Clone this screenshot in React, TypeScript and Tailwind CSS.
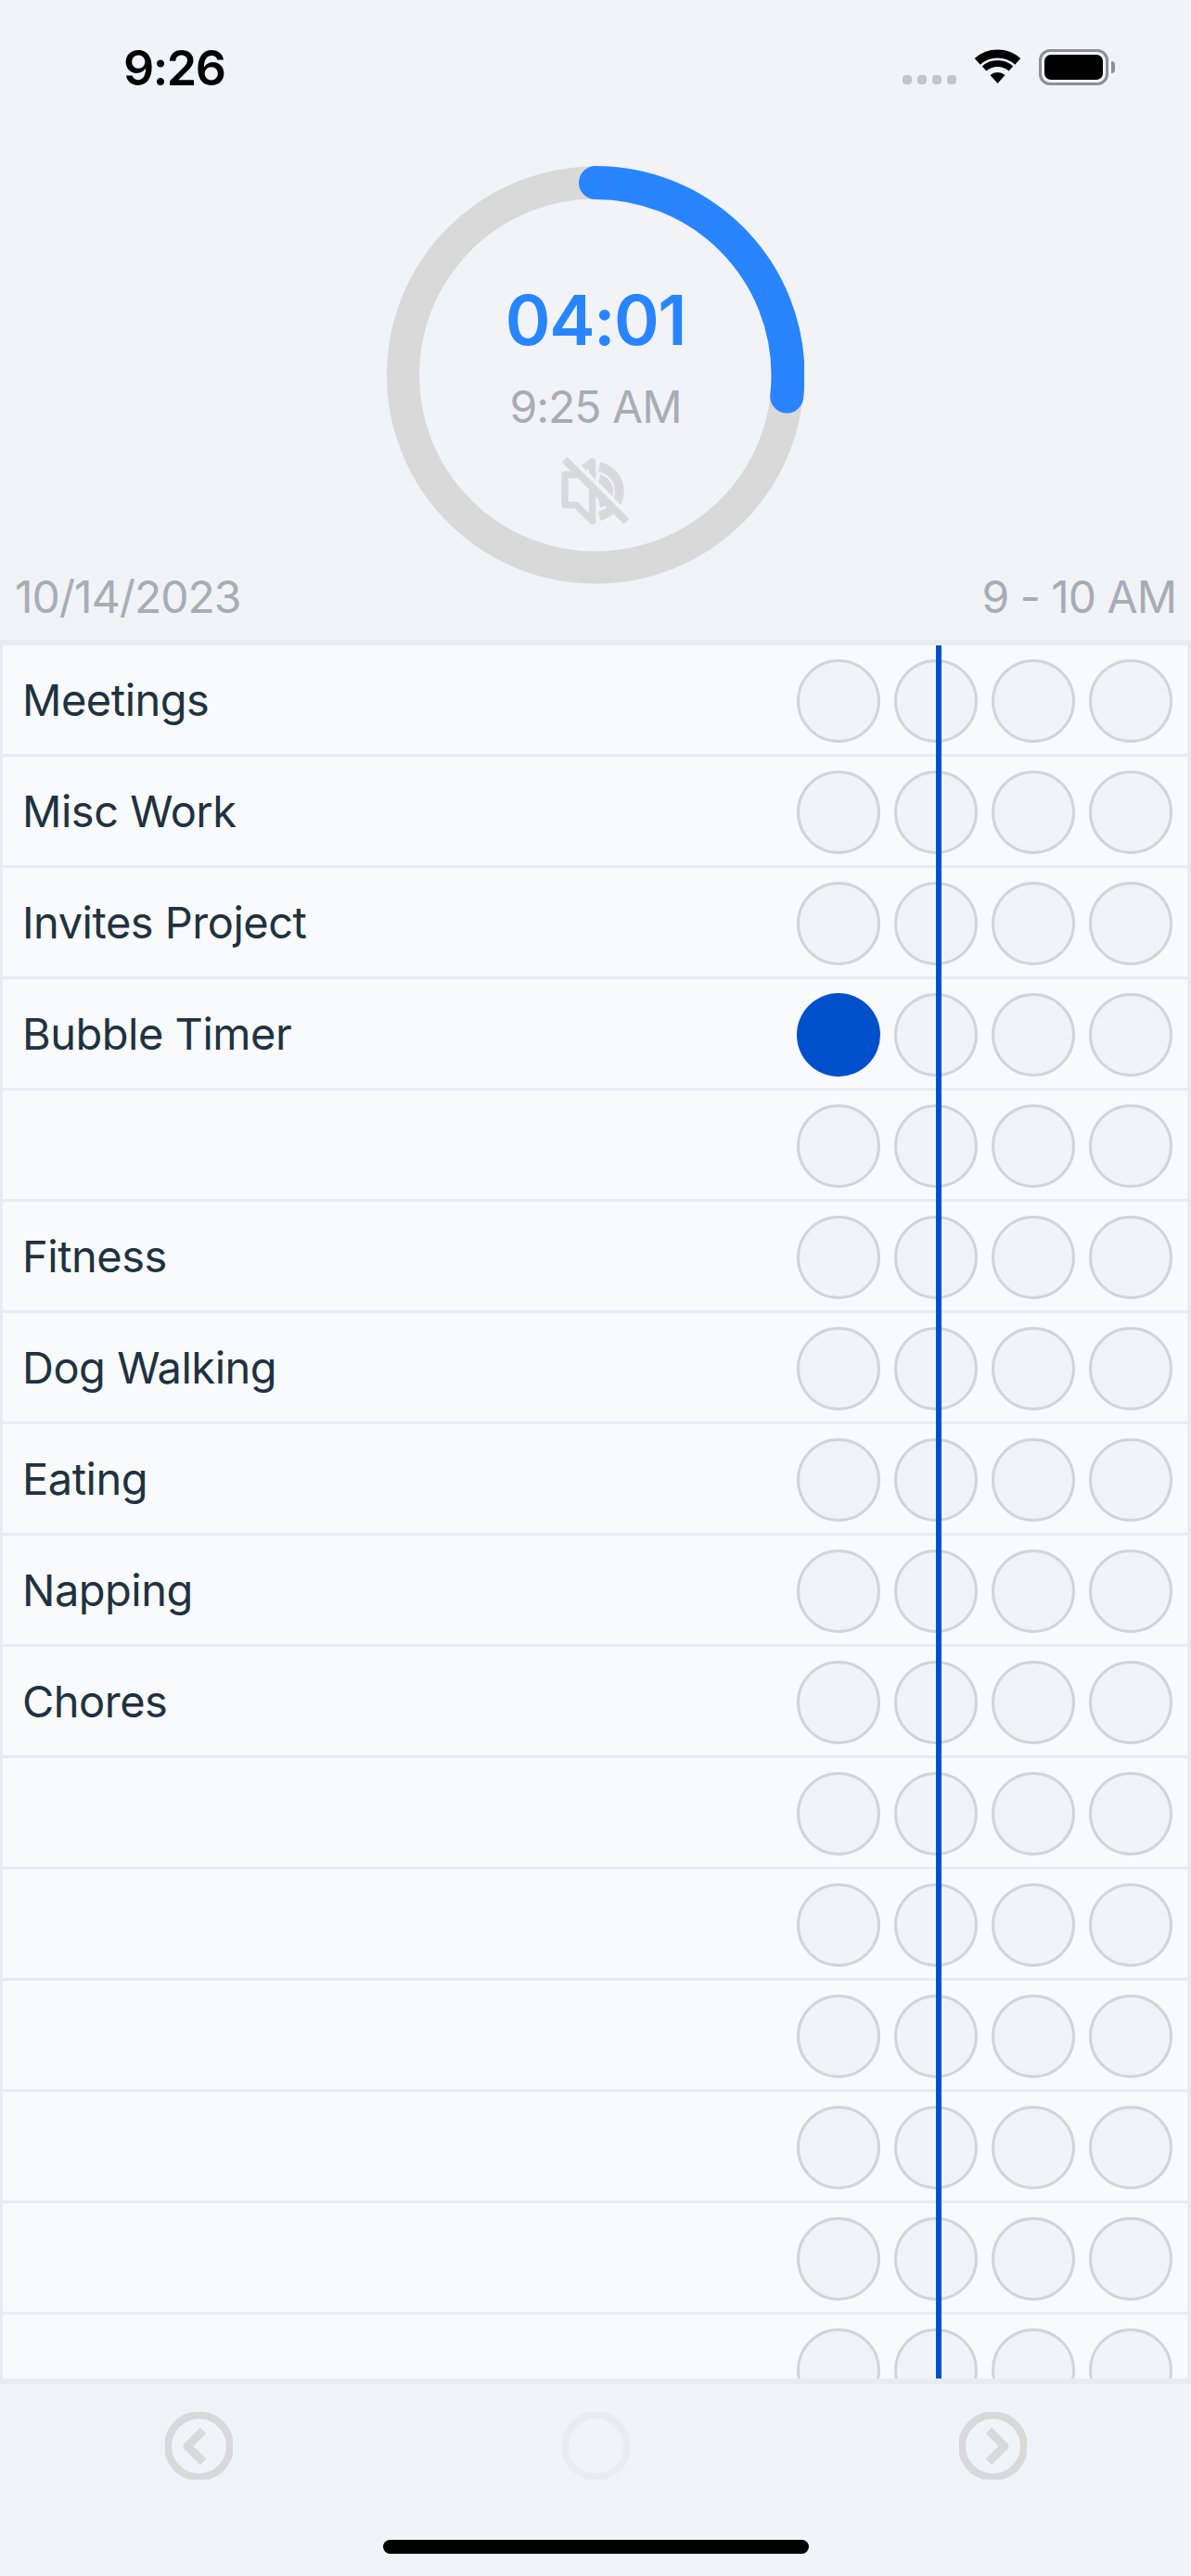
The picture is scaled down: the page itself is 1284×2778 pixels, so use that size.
const rows = [
  "Meetings",
  "Misc Work",
  "Invites Project",
  "Bubble Timer",
  "",
  "Fitness",
  "Dog Walking",
  "Eating",
  "Napping",
  "Chores",
  "",
  "",
  "",
  "",
  "",
  "",
];

function StatusBar() {
  return (
    <div className="h-[179px] flex items-start justify-between pt-[44px] pl-[133px] pr-[82px]">
      <span className="text-[52px] leading-[60px] font-semibold text-black tracking-[-1.5px]">9:26</span>
      <div className="flex items-start mt-[9px]">
        <div className="flex gap-[6px] mt-[28px] mr-[20px]">
          {[0, 1, 2, 3].map((i) => (
            <div key={i} className="w-[10px] h-[10px] rounded-[4px] bg-[#c4c4c6]" />
          ))}
        </div>
        <svg width="49" height="38" viewBox="0 0 49 38" className="mr-[20px]">
          <path d="M2.8 13.3A32.5 32.5 0 0 1 46.2 13.3" fill="none" stroke="#000" strokeWidth="9" />
          <path d="M10.1 21A21.5 21.5 0 0 1 38.9 21" fill="none" stroke="#000" strokeWidth="7" />
          <path d="M24.5 37L16.5 28.1A12 12 0 0 1 32.5 28.1Z" fill="#000" />
        </svg>
        <div className="flex items-center">
          <div className="w-[75px] h-[39px] rounded-[12px] border-[3px] border-[#8e8e93] p-[3px]">
            <div className="w-full h-full rounded-[7px] bg-black" />
          </div>
          <div className="w-[4px] h-[13px] ml-[3px] rounded-r-full bg-[#8e8e93]" />
        </div>
      </div>
    </div>
  );
}

function MuteIcon() {
  return (
    <svg width="74" height="76" viewBox="135 72 222 228">
      <path d="M147 135H183L236 92V285L183 233H147Z" fill="none" stroke="#d9d9d9" strokeWidth="22" strokeLinejoin="round" />
      <path d="M258 109A81 81 0 0 1 258 268" fill="none" stroke="#d9d9d9" strokeWidth="30" />
      <path d="M258 149A40 40 0 0 1 258 227" fill="none" stroke="#d9d9d9" strokeWidth="28" />
      <path d="M152 80L352 280" stroke="#f1f3f7" strokeWidth="34" />
      <path d="M146 86L346 286" stroke="#d9d9d9" strokeWidth="24" />
    </svg>
  );
}

function TimerRing() {
  return (
    <div className="relative w-[450px] h-[451px] mx-auto flex flex-col items-center pt-[121px]">
      <svg width="450" height="451" viewBox="0 0 450 451" className="absolute inset-0">
        <circle cx="225" cy="225.5" r="207.5" fill="none" stroke="#d9d9d9" strokeWidth="35" />
        <circle
          cx="225"
          cy="225.5"
          r="207.5"
          fill="none"
          stroke="#2885ff"
          strokeWidth="36"
          strokeLinecap="round"
          strokeDasharray="349 1304"
          transform="rotate(-90 225 225.5)"
        />
      </svg>
      <span className="text-[74px] leading-[90px] font-semibold tracking-[-1.5px] text-[#2885ff]">04:01</span>
      <span className="text-[48px] leading-[58px] tracking-[-1px] text-[#a8adb4] mt-[20px]">9:25 AM</span>
      <div className="mt-[23px]">
        <MuteIcon />
      </div>
    </div>
  );
}

function Bubble({ filled }: { filled?: boolean }) {
  return filled ? (
    <div className="w-[90px] h-[90px] rounded-full bg-[#0050cc]" />
  ) : (
    <div className="w-[90px] h-[90px] rounded-full bg-[#f1f3f6] border-[3px] border-[#d2d5d8]" />
  );
}

function Row({ name, active }: { name: string; active: boolean }) {
  return (
    <div className="h-[120px] shrink-0 flex items-center justify-between bg-[#f8fafc] border-b-[3px] border-[#e9ebf0] pl-[21px] pr-[16px] pt-[3px]">
      <span className="text-[47px] leading-[60px] tracking-[-0.5px] text-[#1f3240] pb-[2px]">{name}</span>
      <div className="flex gap-[15px]">
        <Bubble filled={active} />
        <Bubble />
        <Bubble />
        <Bubble />
      </div>
    </div>
  );
}

function NavButton({ dir, faint }: { dir?: "left" | "right"; faint?: boolean }) {
  return (
    <div className="flex justify-center">
      <svg width="73" height="73" viewBox="0 0 73 73">
        <circle cx="36.5" cy="37" r="33.5" fill="none" stroke={faint ? "#ebecef" : "#d9d9d9"} strokeWidth="8" />
        {dir === "left" && <path d="M41 20L24 37L41 54" fill="none" stroke="#d9d9d9" strokeWidth="9" strokeLinejoin="round" />}
        {dir === "right" && <path d="M32 20L49 37L32 54" fill="none" stroke="#d9d9d9" strokeWidth="9" strokeLinejoin="round" />}
      </svg>
    </div>
  );
}

export default function App() {
  return (
    <div className="w-[1284px] h-[2778px] overflow-hidden bg-[#f1f3f7] flex flex-col font-['Inter',sans-serif]">
      <StatusBar />
      <TimerRing />
      <div className="flex justify-between items-start h-[76px] -mt-[16px] px-[16px] text-[48px] leading-[60px] tracking-[-1px] text-[#a8adb4]">
        <span>10/14/2023</span>
        <span>9 - 10 AM</span>
      </div>
      <div className="relative h-[1881px] shrink-0 overflow-hidden border-t-[6px] border-b-[6px] border-l-[3px] border-r-[4px] border-[#e9ebf0]">
        <div className="flex flex-col">
          {rows.map((name, i) => (
            <Row key={i} name={name} active={i === 3} />
          ))}
        </div>
        <div className="absolute top-0 bottom-0 left-[1006px] w-[6px] bg-[#0050cc]" />
      </div>
      <div className="grid grid-cols-3 mt-[30px]">
        <NavButton dir="left" />
        <NavButton faint />
        <NavButton dir="right" />
      </div>
      <div className="w-[459px] h-[15px] mx-auto mt-[65px] rounded-full bg-black" />
    </div>
  );
}
